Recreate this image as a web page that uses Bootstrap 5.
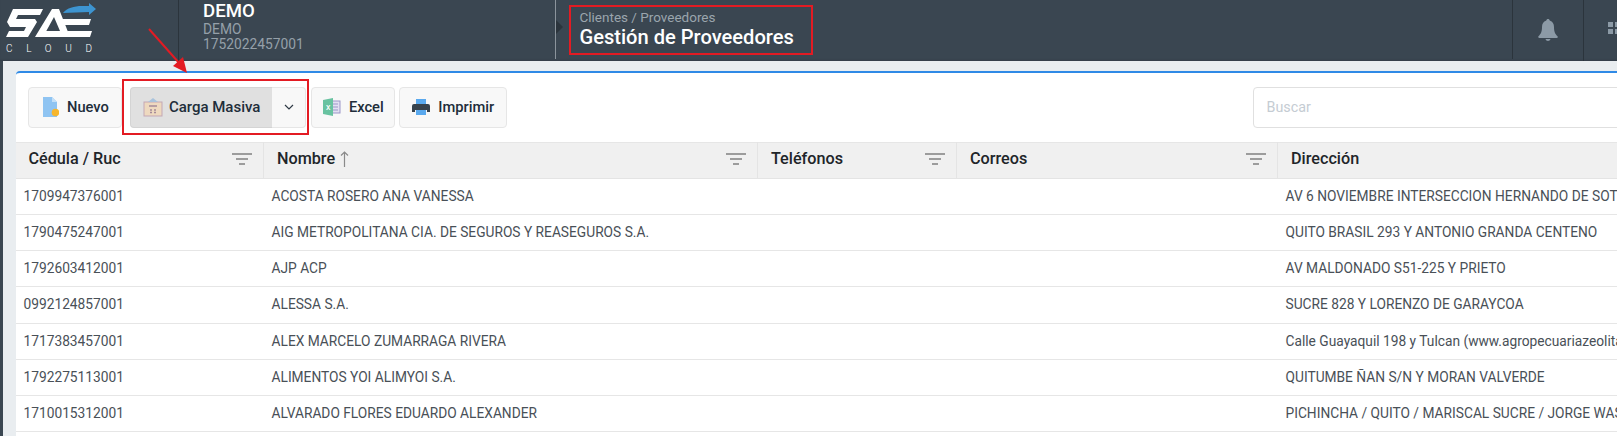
<!DOCTYPE html>
<html lang="es">
<head>
    <meta charset="UTF-8">
    <meta name="viewport" content="width=device-width, initial-scale=1">
    <title>Gestión de Proveedores</title>
    <link href="https://cdn.jsdelivr.net/npm/bootstrap@5.3.0/dist/css/bootstrap.min.css" rel="stylesheet">
    <script src="https://cdn.jsdelivr.net/npm/bootstrap@5.3.0/dist/js/bootstrap.bundle.min.js"></script>
    <style>
        html, body { height: 100%; overflow: hidden; }
        body { font-family: Roboto, "Liberation Sans", sans-serif; background: #3a4651; position: relative; width: 1617px; }

        /* Barra superior */
        .top-bar { height: 61px; background: #3a4651; box-shadow: inset 0 -2px 2px -1px rgba(0,0,0,.12); overflow: hidden; }
        .logo-box { width: 178px; flex: none; }
        .company { width: 376.5px; flex: none; padding-left: 24px; border-left: 1px solid #2b343c; color: #95a0a9; font-size: 13.8px; line-height: 15px; padding-top: 1px; }
        .company-name { color: #fff; font-size: 18.6px; font-weight: 500; line-height: 20px; padding-bottom: 1px; }
        .title-box { flex: 1; height: 59px; padding: 10px 0 0 24px; border-left: 1px solid #8b949c; position: relative; }
        .title-box::before { content: ""; position: absolute; left: 0; top: 20px; border: 7px solid transparent; border-left-color: #2b343c; }
        .crumb { color: #9aa5ad; font-size: 13.5px; line-height: 15px; }
        .page-title { color: #fff; font-size: 20.1px; font-weight: 500; line-height: 24px; }
        .bar-item { width: 71px; flex: none; height: 59px; border-left: 1px solid #2b343c; display: flex; align-items: center; justify-content: center; }
        .bar-item.last-item { width: 34px; justify-content: flex-start; padding-left: 24px; height: 61px; }
        .bar-item.last-item svg { flex: none; }

        /* Contenido */
        .page-body { margin-left: 3px; height: 375px; background: #e9edf0; padding: 10px 0 0 12.5px; width: 1800px; }
        .main-card { width: 1700px; height: 400px; background: #fff; border-top: 2px solid #2f8ae6; border-radius: 4px 4px 0 0; }
        .tool-row { height: 68.5px; padding: 13.5px 12.5px 0; gap: 4px; }
        .tool-btn { height: 41px; background: #f8f8f8; border: 1px solid #e6e6e6; border-radius: 4px; color: #212d3a; font-size: 14.7px; font-weight: 500; padding: 0 12px; display: inline-flex; align-items: center; gap: 8px; }
        .tool-btn:hover { background: #f8f8f8; border-color: #e6e6e6; }
        .tool-btn.is-pressed { background: #e0e0e0; border-color: #d4d4d4; border-right-color: #c8c8c8; border-radius: 4px 0 0 4px; font-size: 15px; gap: 6px; }
        .tool-caret { width: 34px; padding: 0; justify-content: center; border-left: 0; border-radius: 0 4px 4px 0; }
        .tool-narrow { padding: 0 10.5px; }
        .load-group { margin-left: 4px; margin-right: 1px; }
        .search-box { width: 450.5px; height: 41px; border: 1px solid #e0e0e0; border-radius: 4px; font-size: 14.3px; padding: 0 13px; box-shadow: none; }
        .search-box::placeholder { color: #c5ccd3; }

        .grid-wrap { width: 1700px; }
        .data-grid { table-layout: fixed; width: 1700px; margin: 0; border-top: 1px solid #e6e6e6; }
        .data-grid th { height: 36px; background: #f0f0f0; color: #212529; font-size: 16.2px; font-weight: 500; padding: 0 0 3px 13px; border-bottom: 1px solid #e4e4e4; border-right: 1px solid #e4e4e4; vertical-align: middle; box-shadow: none; }
        .data-grid td { height: 36px; padding: 0 0 0 8px; color: #495057; font-size: 13.75px; border-bottom: 1px solid #e6e6e6; vertical-align: middle; white-space: nowrap; overflow: hidden; box-shadow: none; }
        .data-grid tbody tr:nth-child(4) td { height: 37px; }
        .head-cell { display: flex; align-items: center; padding-right: 11px; line-height: 20px; }
        .sort-arrow { margin-left: 5px; }
        .filter-icon { margin-left: auto; margin-top: 1px; }

        /* Marcas rojas */
        .red-frame { position: absolute; border: 2px solid #e31b23; pointer-events: none; }
        .frame-title { left: 569px; top: 5px; width: 244px; height: 50px; }
        .frame-load { left: 122px; top: 79px; width: 187px; height: 56px; }
        .red-arrow { position: absolute; left: 140px; top: 22px; pointer-events: none; }
    </style>
</head>
<body>

<!-- Barra superior -->
<header class="top-bar d-flex">
    <div class="logo-box">
        <svg width="105" height="60" viewBox="0 0 105 60">
            <g fill="#fff">
                <polygon points="13,9 43,9 40,15 18,15 16,19 35,19 37,22 28,37 6,37 9,31 24,31 26,27 10,27 7,22"/>
                <polygon points="52,9 59,9 70,37 38,37 41,31 60,31 54,17 43,37 35,37"/>
                <polygon points="61,19 91,19 89,25 63,25"/>
                <polygon points="67,31 92,31 90,37 69,37"/>
            </g>
            <path d="M63 13 C67 8 74 6 82 6 L89 6 L89 3 L96 9 L89 15 L89 12 L63 13Z" fill="#3d94d0"/>
            <text x="6" y="52" fill="#fff" font-family="Roboto, sans-serif" font-size="10" font-weight="300" textLength="86">CLOUD</text>
        </svg>
    </div>
    <div class="company">
        <div class="company-name">DEMO</div>
        <div>DEMO</div>
        <div>1752022457001</div>
    </div>
    <div class="title-box">
        <div class="crumb">Clientes / Proveedores</div>
        <div class="page-title">Gestión de Proveedores</div>
    </div>
    <div class="bar-item">
        <svg width="20" height="22" viewBox="0 0 20 22"><path d="M10 0c1 0 1.600.7 1.700 1.600C14.700 2.400 16 5 16 8c0 5 1.300 7 3.500 9.300.7.800.2 1.700-.7 1.700H1.200c-.9 0-1.400-.9-.7-1.700C2.700 15 4 13 4 8c0-3 1.300-5.600 4.300-6.400C8.400.7 9 0 10 0zM7.500 20h5c-.3 1.200-1.300 2-2.500 2s-2.200-.8-2.500-2z" fill="#8c9aa6"/></svg>
    </div>
    <div class="bar-item last-item">
        <svg width="28" height="20" viewBox="0 0 28 20" fill="#8c9aa6">
            <rect x="0" y="1" width="5" height="5"/><rect x="7" y="1" width="5" height="5"/><rect x="14" y="1" width="5" height="5"/>
            <rect x="0" y="8" width="5" height="5"/><rect x="7" y="8" width="5" height="5"/><rect x="14" y="8" width="5" height="5"/>
        </svg>
    </div>
</header>

<!-- Contenido -->
<div class="page-body">
    <div class="main-card">
        <div class="tool-row d-flex">
            <button type="button" class="btn tool-btn">
                <svg width="18" height="20" viewBox="-1 0 18 20"><path d="M1 0h9l5 5v15H1z" fill="#8fc4f2"/><path d="M10 0l5 5h-5z" fill="#c4e0f8"/><circle cx="13.500" cy="15.500" r="3.800" fill="#f6b62d"/></svg>
                Nuevo
            </button>
            <div class="btn-group load-group">
                <button type="button" class="btn tool-btn is-pressed">
                    <svg width="20" height="20" viewBox="0 0 20 20"><rect x="1" y="5" width="18" height="14" fill="#eed9bf" stroke="#c3a7b5"/><path d="M5 5l5-4 5 4z" fill="#a9c3dc"/><path d="M6 9h8M7 13h2M11 13h2M7 15.500h2M11 15.500h2" stroke="#a58a99" stroke-width="1.300"/></svg>
                    Carga Masiva
                </button>
                <button type="button" class="btn tool-btn tool-caret" aria-label="Más">
                    <svg width="10" height="6" viewBox="0 0 10 6"><path d="M1 1l4 4 4-4" fill="none" stroke="#2f3a45" stroke-width="1.200"/></svg>
                </button>
            </div>
            <button type="button" class="btn tool-btn tool-narrow">
                <svg width="18" height="18" viewBox="0 0 18 18"><rect x="7" y="3" width="10" height="12" fill="#e3e0f2" stroke="#9b96c8"/><path d="M10 6h5M10 9h5M10 12h5" stroke="#9b96c8"/><path d="M0 2l10-2v18L0 16z" fill="#68c2a0"/><text x="3" y="12" font-size="7" fill="#fff" font-family="Roboto, sans-serif">X</text></svg>
                Excel
            </button>
            <button type="button" class="btn tool-btn">
                <svg width="18" height="18" viewBox="0 0 18 18"><rect x="4" y="1" width="10" height="5" fill="#5aa9ee"/><path d="M2 6h14a2 2 0 0 1 2 2v6h-3v-2H3v2H0V8a2 2 0 0 1 2-2z" fill="#37424c"/><rect x="4" y="12" width="10" height="5" fill="#5aa9ee"/></svg>
                Imprimir
            </button>
            <input type="text" class="form-control search-box ms-auto" placeholder="Buscar">
        </div>

        <div class="grid-wrap">
            <table class="table data-grid">
                <colgroup>
                    <col style="width: 248px"><col style="width: 494px"><col style="width: 199px"><col style="width: 321px"><col>
                </colgroup>
                <thead>
                    <tr>
                        <th><div class="head-cell">Cédula / Ruc<svg class="filter-icon" width="20" height="12" viewBox="0 0 20 12"><path d="M0 1h20M4 6h12M7 11h6" stroke="#808080" stroke-width="1.500"/></svg></div></th>
                        <th><div class="head-cell">Nombre<svg class="sort-arrow" width="9" height="16" viewBox="0 0 9 16"><path d="M4.500 1v15M1 4.500L4.500 1 8 4.500" fill="none" stroke="#8a8a8a" stroke-width="1.200"/></svg><svg class="filter-icon" width="20" height="12" viewBox="0 0 20 12"><path d="M0 1h20M4 6h12M7 11h6" stroke="#808080" stroke-width="1.500"/></svg></div></th>
                        <th><div class="head-cell">Teléfonos<svg class="filter-icon" width="20" height="12" viewBox="0 0 20 12"><path d="M0 1h20M4 6h12M7 11h6" stroke="#808080" stroke-width="1.500"/></svg></div></th>
                        <th><div class="head-cell">Correos<svg class="filter-icon" width="20" height="12" viewBox="0 0 20 12"><path d="M0 1h20M4 6h12M7 11h6" stroke="#808080" stroke-width="1.500"/></svg></div></th>
                        <th><div class="head-cell">Dirección</div></th>
                    </tr>
                </thead>
                <tbody>
                    <tr><td>1709947376001</td><td>ACOSTA ROSERO ANA VANESSA</td><td></td><td></td><td>AV 6 NOVIEMBRE INTERSECCION HERNANDO DE SOTO</td></tr>
                    <tr><td>1790475247001</td><td>AIG METROPOLITANA CIA. DE SEGUROS Y REASEGUROS S.A.</td><td></td><td></td><td>QUITO BRASIL 293 Y ANTONIO GRANDA CENTENO</td></tr>
                    <tr><td>1792603412001</td><td>AJP ACP</td><td></td><td></td><td>AV MALDONADO S51-225 Y PRIETO</td></tr>
                    <tr><td>0992124857001</td><td>ALESSA S.A.</td><td></td><td></td><td>SUCRE 828 Y LORENZO DE GARAYCOA</td></tr>
                    <tr><td>1717383457001</td><td>ALEX MARCELO ZUMARRAGA RIVERA</td><td></td><td></td><td>Calle Guayaquil 198 y Tulcan (www.agropecuariazeolita.com)</td></tr>
                    <tr><td>1792275113001</td><td>ALIMENTOS YOI ALIMYOI S.A.</td><td></td><td></td><td>QUITUMBE ÑAN S/N Y MORAN VALVERDE</td></tr>
                    <tr><td>1710015312001</td><td>ALVARADO FLORES EDUARDO ALEXANDER</td><td></td><td></td><td>PICHINCHA / QUITO / MARISCAL SUCRE / JORGE WASHINGTON</td></tr>
                </tbody>
            </table>
        </div>
    </div>
</div>

<!-- Marcas rojas sobre la captura -->
<div class="red-frame frame-title"></div>
<div class="red-frame frame-load"></div>
<svg class="red-arrow" width="60" height="56" viewBox="0 0 60 56">
    <path d="M9 7L40 42" stroke="#e31b23" stroke-width="2"/>
    <path d="M47 51L33 44 43 35z" fill="#e31b23"/>
</svg>

</body>
</html>
